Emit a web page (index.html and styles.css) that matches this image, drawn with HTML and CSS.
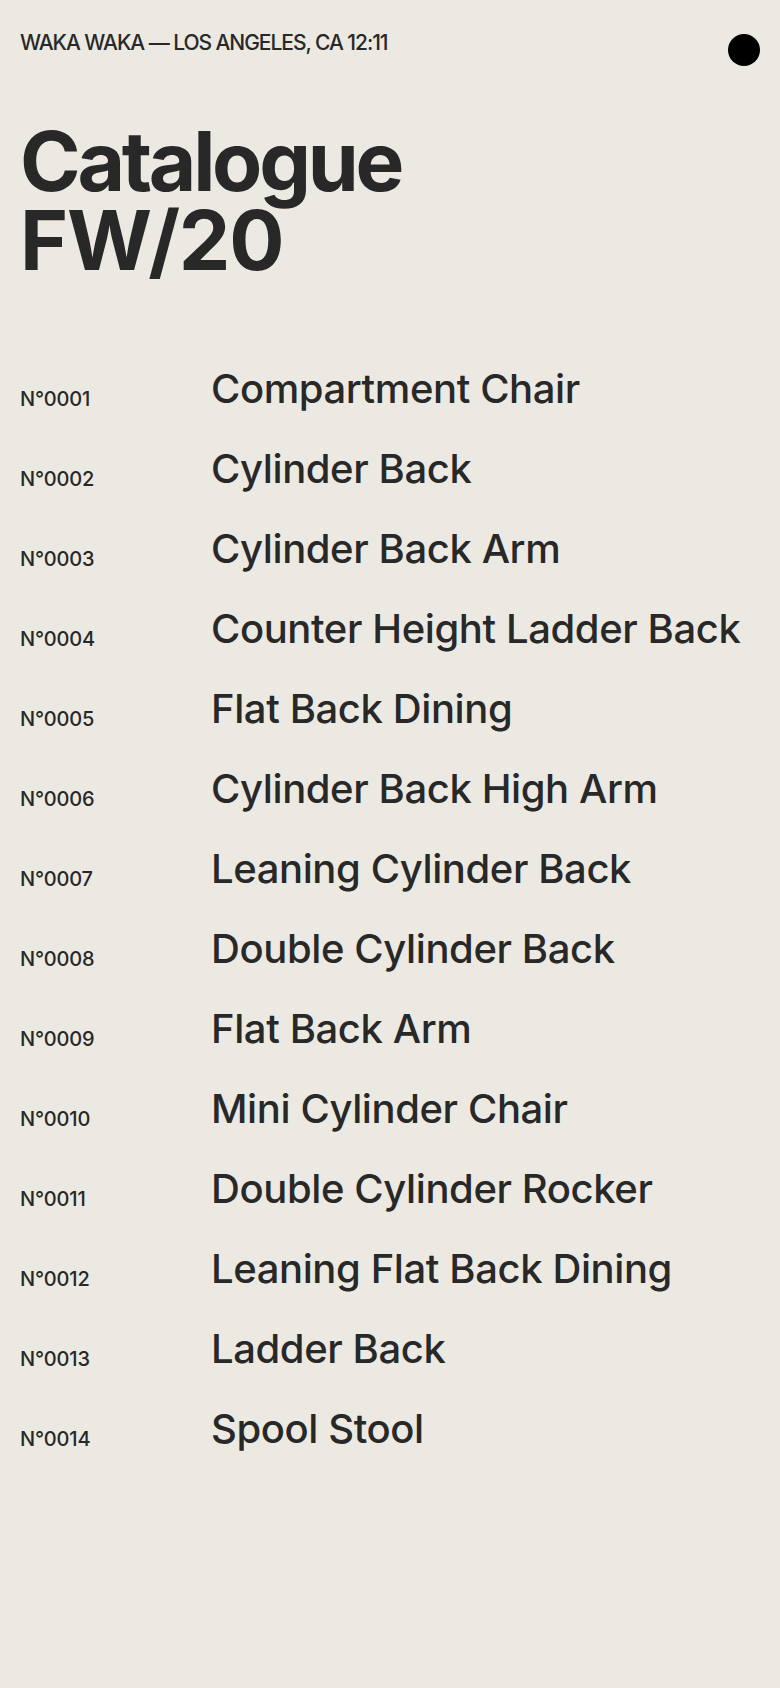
FILE: index.html
```html
<!DOCTYPE html>
<html lang="en">
<head>
<meta charset="utf-8">
<title>Catalogue FW/20</title>
<link rel="stylesheet" href="styles.css">
</head>
<body>
<div class="page">
  <header class="top">
    <div class="meta">WAKA WAKA — LOS ANGELES, CA 12:11</div>
    <div class="dot"></div>
  </header>
  <h1 class="title"><span class="line line-a">Catalogue</span><span class="line line-b">FW/20</span></h1>
  <ul class="list">
    <li class="row"><span class="num">N°0001</span><span class="name">Compartment Chair</span></li>
    <li class="row"><span class="num">N°0002</span><span class="name">Cylinder Back</span></li>
    <li class="row"><span class="num">N°0003</span><span class="name">Cylinder Back Arm</span></li>
    <li class="row"><span class="num">N°0004</span><span class="name">Counter Height Ladder Back</span></li>
    <li class="row"><span class="num">N°0005</span><span class="name">Flat Back Dining</span></li>
    <li class="row"><span class="num">N°0006</span><span class="name">Cylinder Back High Arm</span></li>
    <li class="row"><span class="num">N°0007</span><span class="name">Leaning Cylinder Back</span></li>
    <li class="row"><span class="num">N°0008</span><span class="name">Double Cylinder Back</span></li>
    <li class="row"><span class="num">N°0009</span><span class="name">Flat Back Arm</span></li>
    <li class="row"><span class="num">N°0010</span><span class="name">Mini Cylinder Chair</span></li>
    <li class="row"><span class="num">N°0011</span><span class="name">Double Cylinder Rocker</span></li>
    <li class="row"><span class="num">N°0012</span><span class="name">Leaning Flat Back Dining</span></li>
    <li class="row"><span class="num">N°0013</span><span class="name">Ladder Back</span></li>
    <li class="row"><span class="num">N°0014</span><span class="name">Spool Stool</span></li>
  </ul>
</div>
</body>
</html>
```
FILE: styles.css
```css
html, body {
  margin: 0;
  padding: 0;
  background: #ece9e3;
}
body {
  font-family: Inter, "Liberation Sans", Arial, sans-serif;
  color: #282828;
  min-height: 1688px;
}
.page {
  padding: 0 20px;
}
.top {
  display: flex;
  justify-content: space-between;
  align-items: flex-start;
  padding-top: 32px;
}
.meta {
  font-size: 21px;
  line-height: 21px;
  font-weight: 500;
  letter-spacing: -0.05em;
}
.dot {
  width: 32px;
  height: 32px;
  border-radius: 50%;
  background: #000;
  margin-top: 2px;
}
.title {
  margin: 56px 0 0;
  font-size: 82px;
  line-height: 79px;
  font-weight: 700;
}
.line {
  display: block;
}
.line-a {
  letter-spacing: -0.04em;
}
.line-b {
  letter-spacing: -0.015em;
}
.list {
  list-style: none;
  margin: 85px 0 0;
  padding: 0;
  display: grid;
  row-gap: 32px;
}
.row {
  display: grid;
  grid-template-columns: 191px 1fr;
  align-items: end;
}
.num {
  font-size: 20px;
  line-height: 28px;
  font-weight: 500;
  letter-spacing: -0.01em;
}
.name {
  font-size: 40px;
  font-weight: 500;
  letter-spacing: -0.01em;
  line-height: 48px;
}
```
